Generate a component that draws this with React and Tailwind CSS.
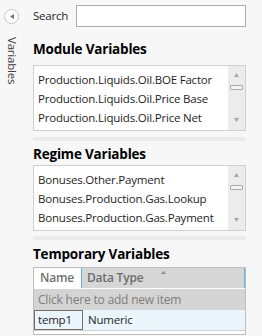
import React from "react";

const moduleVars = [
  "Production.Liquids.Oil.BOE Factor",
  "Production.Liquids.Oil.Price Base",
  "Production.Liquids.Oil.Price Net",
];

const regimeVars = [
  "Bonuses.Other.Payment",
  "Bonuses.Production.Gas.Lookup",
  "Bonuses.Production.Gas.Payment",
];

function ScrollBar() {
  return (
    <div className="relative w-[17px] shrink-0 bg-[#ececec]">
      <svg className="absolute left-[6px] top-[7px]" width="5" height="4" viewBox="0 0 5 4">
        <path d="M2.5 0L5 4H0z" fill="#a6a6a6" />
      </svg>
      <div className="absolute left-[2px] top-[19px] h-[5px] w-[13px] rounded-[1px] border border-[#a9a9a9] bg-[#f4f4f4]" />
      <svg className="absolute bottom-[8px] left-[6px]" width="5" height="4" viewBox="0 0 5 4">
        <path d="M0 0H5L2.5 4z" fill="#a6a6a6" />
      </svg>
    </div>
  );
}

function VarList({ items }) {
  return (
    <div className="flex h-[66px] shrink-0 overflow-hidden border border-[#cfcfcf] bg-white">
      <div className="flex-1 overflow-hidden pl-[4px] pt-[4px]">
        {items.map((item) => (
          <div key={item} className="h-[19px] whitespace-nowrap leading-[19px] text-[#1e1e1e]">
            {item}
          </div>
        ))}
      </div>
      <ScrollBar />
    </div>
  );
}

function Heading({ children, className }) {
  return (
    <h2 className={"shrink-0 text-[13.5px] font-bold leading-[18px] text-black " + className}>
      {children}
    </h2>
  );
}

export default function App() {
  return (
    <div
      className="flex min-h-[336px] w-[262px] bg-[#f7f7f7] text-[11.5px] tracking-[-0.2px]"
      style={{ fontFamily: '"Open Sans", "Noto Sans", sans-serif' }}
    >
      <div className="flex w-[33px] shrink-0 flex-col items-start pl-[4px] pt-[9px]">
        <button className="flex h-[15px] w-[15px] items-center justify-center rounded-full border border-[#c6c6c6] bg-white">
          <svg width="4" height="5" viewBox="0 0 4 5">
            <path d="M4 0V5L0 2.5z" fill="#6f6f6f" />
          </svg>
        </button>
        <div className="ml-[2px] mt-[13px] text-[11.5px] leading-[12px] text-[#3c3c3c] [writing-mode:vertical-rl]">
          Variables
        </div>
      </div>

      <div className="flex min-w-0 flex-1 flex-col pr-[16px]">
        <div className="mt-[5px] flex h-[22px] shrink-0 items-center">
          <span className="text-[#1e1e1e]">Search</span>
          <input className="ml-auto h-[22px] w-[170px] border border-[#acacac] bg-white outline-none" />
        </div>

        <Heading className="mt-[13px]">Module Variables</Heading>
        <div className="mt-[7px]">
          <VarList items={moduleVars} />
        </div>

        <div className="mt-[6px] h-[4px] shrink-0 bg-[#ebebeb]" />

        <Heading className="mt-[4px]">Regime Variables</Heading>
        <div className="mt-[2px]">
          <VarList items={regimeVars} />
        </div>

        <div className="mt-[5px] h-[4px] shrink-0 bg-[#ebebeb]" />

        <Heading className="mt-[5px]">Temporary Variables</Heading>

        <div className="mt-[4px] shrink-0 border border-[#bdbdbd] bg-white">
          <div className="flex h-[21px] border-b border-white">
            <div className="flex w-[48px] items-center border-r border-[#67b3e6] bg-white pl-[6px] text-[12px] font-semibold text-[#6e6e6e]">
              Name
            </div>
            <div className="relative flex flex-1 items-center border-r border-[#67b3e6] bg-[#d6d6d6] pl-[5px] text-[12px] font-semibold text-[#6e6e6e]">
              Data Type
              <svg className="absolute left-[79px] top-[3px]" width="5" height="3" viewBox="0 0 5 3">
                <path d="M2.5 0L5 3H0z" fill="#8a8a8a" />
              </svg>
            </div>
          </div>
          <div className="flex h-[21px] items-center bg-[#d4d4d4] pl-[4px] text-[12px] text-[#7e7e7e]">
            Click here to add new item
          </div>
          <div className="flex h-[21px] border-b border-[#cfcfcf] bg-[#eaf5fc]">
            <div className="flex w-[49px] items-center border border-[#6f6f6f] pl-[3px] text-[#1e1e1e]">
              temp1
            </div>
            <div className="flex flex-1 items-center pl-[5px] text-[#1e1e1e]">Numeric</div>
          </div>
          <div className="h-[3px]" />
        </div>
      </div>
    </div>
  );
}
